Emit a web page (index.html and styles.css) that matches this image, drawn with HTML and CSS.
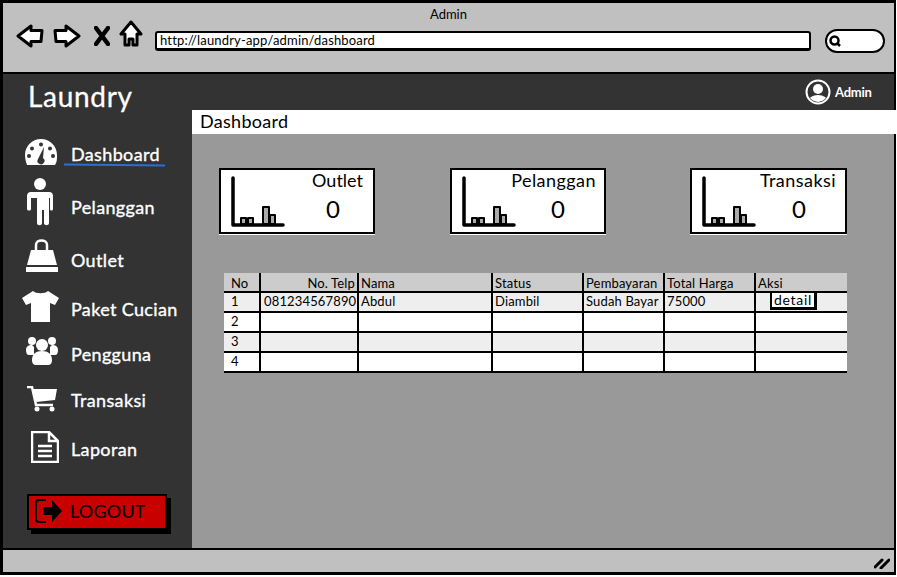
FILE: index.html
```html
<!DOCTYPE html>
<html lang="id">
<head>
<meta charset="utf-8">
<title>Admin</title>
<link rel="stylesheet" href="styles.css">
</head>
<body>
<div class="window">
  <header class="chrome">
    <div class="chrome-title">Admin</div>
    <div class="toolbar">
      <div class="nav-buttons">
        <svg class="tb-arrow" viewBox="0 0 28 24"><path d="M2 12 15 2v4.500h11l-1 11H15V22z"/></svg>
        <svg class="tb-arrow" viewBox="0 0 28 24"><path d="M26 12 13 2v4.500H2l1 11h10V22z"/></svg>
        <svg class="tb-x" viewBox="0 0 16 20"><path d="M2 2l12 16M14 2 2 18"/></svg>
        <svg class="tb-home" viewBox="0 0 24 28"><path d="M12 2 2 14h4v11h4v-6h4v6h4V14h4z"/></svg>
      </div>
      <div class="url">http://laundry-app/admin/dashboard</div>
      <div class="search">
        <svg class="search-icon" viewBox="0 0 12 12"><circle cx="5.500" cy="5.500" r="4"/><path d="M8 8 11 11"/></svg>
      </div>
    </div>
  </header>

  <div class="app">
    <aside class="sidebar">
      <div class="brand">Laundry</div>
      <nav class="menu">
        <a class="menu-item">
          <span class="menu-icon">
            <svg width="34" height="28" viewBox="0 0 34 28"><path class="fill" fill-rule="evenodd" d="M17 1C8 1 1 8 1 17c0 4 1 7 2 10h28c2-3 2-6 2-10C33 8 26 1 17 1zM17 4.500a2 2 0 1 1 0 4 2 2 0 0 1 0-4zM8 8.500a2 2 0 1 1 0 4 2 2 0 0 1 0-4zM26 8.500a2 2 0 1 1 0 4 2 2 0 0 1 0-4zM5 16a2 2 0 1 1 0 4 2 2 0 0 1 0-4zM29 16a2 2 0 1 1 0 4 2 2 0 0 1 0-4zM20 9l-1 11a3.500 3.500 0 1 1-5 1z"/></svg>
          </span>
          <span class="menu-label is-active">Dashboard</span>
        </a>
        <a class="menu-item">
          <span class="menu-icon">
            <svg width="28" height="48" viewBox="0 0 28 48"><circle class="fill" cx="14" cy="6" r="6"/><path class="fill" d="M5 14h18c3 0 4 2 4 4v13c0 2-3 2-3 0V20h-1v25c0 3-5 3-5 0V32h-2v13c0 3-5 3-5 0V20H5v11c0 2-4 2-4 0V18c0-2 1-4 4-4z"/></svg>
          </span>
          <span class="menu-label">Pelanggan</span>
        </a>
        <a class="menu-item">
          <span class="menu-icon">
            <svg width="32" height="34" viewBox="0 0 32 34"><path class="line" d="M10 13V6c0-6 11-6 11 0v7"/><path class="fill" d="M5 11h22l4 15H1zM0 28h32v5H0z"/></svg>
          </span>
          <span class="menu-label">Outlet</span>
        </a>
        <a class="menu-item">
          <span class="menu-icon">
            <svg width="37" height="31" viewBox="0 0 37 31"><path class="fill" d="M11 0c3 3 12 3 15 0l11 7-4 7-5-2v19H9V12l-5 2-4-7z"/></svg>
          </span>
          <span class="menu-label">Paket Cucian</span>
        </a>
        <a class="menu-item">
          <span class="menu-icon">
            <svg width="32" height="30" viewBox="0 0 32 30"><circle class="fill" cx="6" cy="5" r="4"/><circle class="fill" cx="26" cy="5" r="4"/><path class="fill" d="M0 14c0-4 3-5 6-5l2 2v8H3c-2 0-3-2-3-5zM32 14c0-4-3-5-6-5l-2 2v8h5c2 0 3-2 3-5z"/><circle class="fill" cx="16" cy="9" r="6"/><path class="fill" d="M6 24c0-6 4-9 10-9s10 3 10 9c0 4-2 5-4 5H10c-2 0-4-1-4-5z"/></svg>
          </span>
          <span class="menu-label">Pengguna</span>
        </a>
        <a class="menu-item">
          <span class="menu-icon">
            <svg width="30" height="26" viewBox="0 0 30 26"><path class="line" d="M0 1h5l4 18h17"/><path class="fill" d="M6 3h24l-2 11-19 2z"/><circle class="fill" cx="10" cy="23" r="2.500"/><circle class="fill" cx="25" cy="23" r="2.500"/></svg>
          </span>
          <span class="menu-label">Transaksi</span>
        </a>
        <a class="menu-item">
          <span class="menu-icon">
            <svg width="28" height="32" viewBox="0 0 28 32"><path class="line" d="M1 1h17l9 9v21H1zM18 1v9h9M7 15h14M7 20h14M7 25h14"/></svg>
          </span>
          <span class="menu-label">Laporan</span>
        </a>
      </nav>
      <button class="logout" type="button">
        <svg width="28" height="26" viewBox="0 0 28 26"><path class="logout-door" d="M11 2H4C2 2 1 3 1 5v16c0 2 1 3 3 3h7"/><path d="M8 9h9V2l10 11-10 11v-7H8z"/></svg>
        <span>LOGOUT</span>
      </button>
    </aside>

    <div class="workspace">
      <div class="topbar">
        <svg class="avatar" width="26" height="26" viewBox="0 0 26 26"><defs><clipPath id="avatar-clip"><circle cx="13" cy="13" r="10"/></clipPath></defs><circle cx="13" cy="13" r="11.500" class="avatar-ring"/><g clip-path="url(#avatar-clip)"><circle cx="13" cy="10" r="5" class="fill"/><ellipse cx="13" cy="23" rx="10" ry="7" class="fill"/></g></svg>
        <span class="user-name">Admin</span>
      </div>
      <div class="page-title">Dashboard</div>
      <main class="content">
        <section class="cards">
          <article class="card">
            <svg class="chart" width="54" height="52" viewBox="0 0 54 52"><path class="chart-axis" d="M2 2v47h50"/><path class="chart-bars" d="M10 48v-6h5v6zM17 48v-6h5v6zM32 48V31h6v17zM39 48v-9h5v9z"/></svg>
            <div class="card-body"><div class="card-title">Outlet</div><div class="card-value">0</div></div>
          </article>
          <article class="card">
            <svg class="chart" width="54" height="52" viewBox="0 0 54 52"><path class="chart-axis" d="M2 2v47h50"/><path class="chart-bars" d="M10 48v-6h5v6zM17 48v-6h5v6zM32 48V31h6v17zM39 48v-9h5v9z"/></svg>
            <div class="card-body"><div class="card-title">Pelanggan</div><div class="card-value">0</div></div>
          </article>
          <article class="card">
            <svg class="chart" width="54" height="52" viewBox="0 0 54 52"><path class="chart-axis" d="M2 2v47h50"/><path class="chart-bars" d="M10 48v-6h5v6zM17 48v-6h5v6zM32 48V31h6v17zM39 48v-9h5v9z"/></svg>
            <div class="card-body"><div class="card-title">Transaksi</div><div class="card-value">0</div></div>
          </article>
        </section>
        <table class="data">
          <colgroup><col class="c1"><col class="c2"><col class="c3"><col class="c4"><col class="c5"><col class="c6"><col class="c7"></colgroup>
          <thead>
            <tr><th>No</th><th class="right">No. Telp</th><th>Nama</th><th>Status</th><th>Pembayaran</th><th>Total Harga</th><th>Aksi</th></tr>
          </thead>
          <tbody>
            <tr><td>1</td><td>081234567890</td><td>Abdul</td><td>Diambil</td><td>Sudah Bayar</td><td>75000</td><td><button class="detail" type="button">detail</button></td></tr>
            <tr><td>2</td><td></td><td></td><td></td><td></td><td></td><td></td></tr>
            <tr><td>3</td><td></td><td></td><td></td><td></td><td></td><td></td></tr>
            <tr><td>4</td><td></td><td></td><td></td><td></td><td></td><td></td></tr>
          </tbody>
        </table>
      </main>
    </div>
  </div>

  <footer class="statusbar">
    <svg class="grip" width="16" height="12" viewBox="0 0 16 12"><path d="M1 10 8 3M7 11l8-8"/></svg>
  </footer>
</div>
</body>
</html>
```
FILE: styles.css
```css
* { box-sizing: border-box; }
html, body { margin: 0; padding: 0; background: #fff; }
body { font-family: "Lato", "Liberation Sans", sans-serif; color: #000; }

.window {
  width: 896px;
  height: 575px;
  display: flex;
  flex-direction: column;
  border: 3px solid #000;
  border-right-width: 2px;
  background: #333;
}

/* Browser chrome */
.chrome {
  height: 71px;
  flex: none;
  background: #c0c0c0;
  border-bottom: 2px solid #000;
  display: flex;
  flex-direction: column;
}
.chrome-title {
  text-align: center;
  font-size: 13px;
  line-height: 16px;
  padding-top: 3px;
  height: 19px;
}
.toolbar {
  display: flex;
  align-items: center;
  margin-top: 1px;
  padding-left: 13px;
}
.nav-buttons { display: flex; align-items: center; width: 139px; margin-bottom: 10px; }
.nav-buttons svg { fill: #fff; stroke: #000; stroke-width: 3; stroke-linejoin: round; }
.tb-arrow { width: 28px; height: 24px; margin-right: 9px; }
.tb-x { width: 16px; height: 20px; margin: 0 9px 0 4px; fill: none !important; stroke-width: 4.500 !important; stroke-linecap: round; }
.tb-home { width: 24px; height: 28px; margin-top: -3px; }
.url {
  width: 656px;
  height: 20px;
  background: #fff;
  border: 2px solid #000;
  border-bottom-width: 3px;
  border-radius: 3px;
  font-size: 13px;
  line-height: 14px;
  padding-left: 3px;
  letter-spacing: .17px;
}
.search {
  width: 60px;
  height: 24px;
  margin-left: 14px;
  background: #fff;
  border: 2px solid #000;
  border-radius: 12px;
  display: flex;
  align-items: center;
  padding-left: 2px;
}
.search-icon { width: 12px; height: 12px; fill: none; stroke: #000; stroke-width: 2.500; }

/* App */
.app { flex: 1; display: flex; min-height: 0; }
.sidebar {
  width: 189px;
  flex: none;
  background: #333;
  color: #fff;
  display: flex;
  flex-direction: column;
}
.brand {
  height: 53px;
  padding: 4px 0 0 25px;
  font-size: 28px;
  line-height: 36px;
  letter-spacing: .7px;
  -webkit-text-stroke: .3px #fff;
}
.menu {
  display: grid;
  grid-template-rows: 53px 53px 53px 45px 46px 46px 51px;
}
.menu-item {
  display: grid;
  grid-template-columns: 40px auto;
  column-gap: 9px;
  align-items: center;
  padding-left: 19px;
}
.menu-icon { display: flex; justify-content: center; align-items: center; }
.menu-item:nth-child(1) .menu-icon { transform: translate(-1px, -2px); }
.menu-item:nth-child(2) .menu-icon { transform: translate(-2px, -5px); }
.menu-item:nth-child(3) .menu-icon { transform: translate(0, -4px); }
.menu-item:nth-child(4) .menu-icon { transform: translate(-2px, -2px); }
.menu-item:nth-child(5) .menu-icon { transform: translate(0, -3px); }
.menu-item:nth-child(6) .menu-icon { transform: translate(0, -1px); }
.menu-item:nth-child(7) .menu-icon { transform: translate(3px, -2px); }
.fill { fill: #fff; }
.line { fill: none; stroke: #fff; stroke-width: 2.500; }
.menu-label {
  position: relative;
  font-size: 18px;
  font-weight: 400;
  line-height: 22px;
  letter-spacing: .35px;
  -webkit-text-stroke: .35px #fff;
  justify-self: start;
}
.is-active::after {
  content: "";
  position: absolute;
  left: -7px;
  right: -5px;
  bottom: -1px;
  height: 2px;
  background: #2a6fd6;
  transform: rotate(.5deg);
}
.logout {
  margin: 20px 0 0 24px;
  width: 140px;
  height: 36px;
  background: #c80000;
  border: 2px solid #000;
  box-shadow: 4px 4px 0 #000;
  display: flex;
  align-items: center;
  gap: 7px;
  padding: 0 0 2px 6px;
  font: 400 18px/1 "Lato", "Liberation Sans", sans-serif;
  letter-spacing: .2px;
  color: #000;
}
.logout svg { fill: #000; }
.logout-door { fill: none; stroke: #000; stroke-width: 2; }

/* Workspace */
.workspace { flex: 1; display: flex; flex-direction: column; min-width: 0; }
.topbar {
  height: 36px;
  flex: none;
  display: flex;
  align-items: center;
  padding-left: 613px;
  margin-right: -2px;
  color: #fff;
}
.avatar { flex: none; }
.avatar-ring { fill: #333; stroke: #fff; stroke-width: 2; }
.user-name { font-size: 13px; font-weight: 700; margin-left: 4px; letter-spacing: -.25px; }
.page-title {
  height: 24px;
  flex: none;
  background: #fff;
  margin-right: -2px;
  padding-left: 8px;
  font-size: 18px;
  line-height: 22px;
  letter-spacing: .3px;
}
.content {
  flex: 1;
  background: #999;
  padding: 34px 0 0 27px;
}
.cards {
  display: grid;
  grid-template-columns: 231px 240px 157px;
}
.card {
  height: 66px;
  background: #fff;
  border: 2px solid #000;
  box-shadow: 0 1px 0 #fff;
  display: flex;
  padding: 6px 0 0 10px;
}
.card:last-child { width: 157px; }
.card:not(:last-child) { width: 156px; }
.chart { flex: none; }
.chart-axis { fill: none; stroke: #000; stroke-width: 3.500; stroke-linecap: round; stroke-linejoin: round; }
.chart-bars { fill: #aaa; stroke: #000; stroke-width: 2; stroke-linejoin: round; }
.card-body { flex: 1; text-align: right; padding-right: 10px; margin-top: -7px; }
.card:nth-child(2) .card-body { padding-right: 8px; }
.card:nth-child(3) .card-body { padding-right: 9px; }
.card-title { font-size: 18px; line-height: 22px; letter-spacing: .45px; margin-left: -12px; }
.card:nth-child(1) .card-title { letter-spacing: 0; }
.card-value { font-size: 24px; line-height: 30px; margin-top: 3px; text-align: left; padding-left: 41px; }
.card:nth-child(2) .card-value { padding-left: 35px; }
.card:nth-child(3) .card-value { padding-left: 36px; }

.data {
  margin: 39px 0 0 5px;
  width: 623px;
  table-layout: fixed;
  border-collapse: collapse;
  font-size: 13px;
  letter-spacing: .15px;
}
.c1 { width: 36px; }
.c2 { width: 98px; }
.c3 { width: 134px; }
.c4 { width: 91px; }
.c5 { width: 81px; }
.c6 { width: 91px; }
.c7 { width: 92px; }
.data th, .data td {
  height: 20px;
  padding: 0 0 2px 2px;
  text-align: left;
  font-weight: 400;
  border-left: 2px solid #000;
  border-bottom: 2px solid #000;
  white-space: nowrap;
  overflow: hidden;
}
.data th:first-child, .data td:first-child { border-left: 0; padding-left: 7px; }
.data td:nth-child(2) { padding-left: 3px; }
.data th { height: 19px; padding: 2px 0 0 2px; background: #ccc; }
.data th.right { text-align: right; padding-right: 2px; }
.data tbody tr:nth-child(odd) td { background: #eee; }
.data tbody tr:nth-child(even) td { background: #fff; }
.data td:last-child { padding: 0; }
.detail {
  display: block;
  margin: 0 0 1px 14px;
  width: 47px;
  height: 17px;
  padding: 0;
  background: #fff;
  border: 0 solid #000;
  border-width: 0 3px 3px 2px;
  font: 400 14px/14px "Lato", "Liberation Sans", sans-serif;
  letter-spacing: .7px;
  color: #000;
}

/* Status */
.statusbar {
  flex: none;
  height: 24px;
  background: #c0c0c0;
  border-top: 2px solid #000;
  display: flex;
  align-items: center;
  justify-content: flex-end;
  padding: 3px 4px 0 0;
}
.grip { fill: none; stroke: #000; stroke-width: 3; stroke-linecap: round; }
```
